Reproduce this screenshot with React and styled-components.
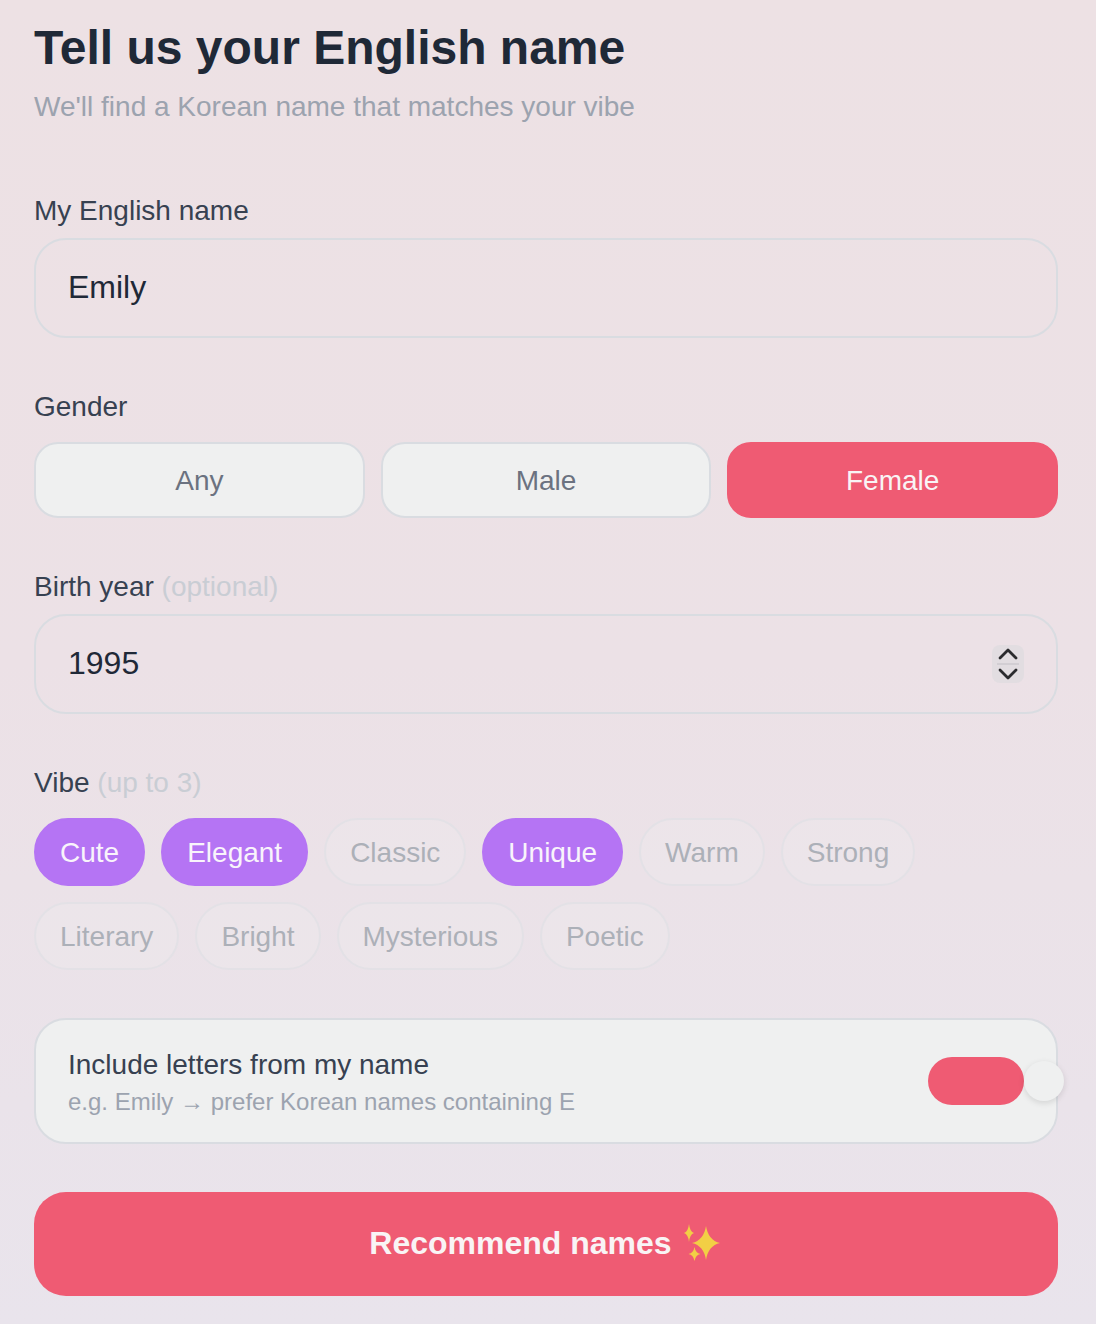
import React from 'react';
import styled, { createGlobalStyle } from 'styled-components';

const GlobalStyle = createGlobalStyle`
  html, body {
    margin: 0;
    padding: 0;
  }
  body {
    font-family: 'Liberation Sans', Arial, sans-serif;
    color: #1f2937;
  }
  * {
    box-sizing: border-box;
  }
`;

const Page = styled.div`
  width: 1096px;
  height: 1324px;
  overflow: hidden;
  padding: 20px 38px 0 34px;
  background: linear-gradient(180deg, #ede1e4 0%, #ece1e6 50%, #e9e4ec 100%);
`;

const Title = styled.h1`
  margin: 0;
  font-size: 48px;
  line-height: 56px;
  font-weight: 700;
  color: #1f2937;
`;

const Subtitle = styled.p`
  margin: 11px 0 0;
  font-size: 28px;
  line-height: 40px;
  color: #9ca3af;
`;

const Label = styled.div`
  margin-top: ${(p) => p.$top || 51}px;
  margin-bottom: ${(p) => p.$gap || 9}px;
  font-size: 28px;
  line-height: 36px;
  color: #374151;
`;

const Hint = styled.span`
  color: #c9cdd4;
`;

const Field = styled.div`
  height: 100px;
  padding: 0 32px;
  display: flex;
  align-items: center;
  justify-content: space-between;
  border: 2px solid #d9dce1;
  border-radius: 32px;
  font-size: 32px;
  color: #1f2937;
`;

const FieldValue = styled.span`
  margin-bottom: 2px;
`;

const Stepper = styled.div`
  width: 32px;
  height: 38px;
  display: flex;
  border-radius: 8px;
  background: #e2dde1;
`;

const Segments = styled.div`
  display: grid;
  grid-template-columns: repeat(3, 1fr);
  gap: 16px;
`;

const Segment = styled.div`
  height: 76px;
  padding-top: 2px;
  display: flex;
  align-items: center;
  justify-content: center;
  border: 2px solid ${(p) => (p.$on ? '#ef5b73' : '#d9dce1')};
  border-radius: 24px;
  background: ${(p) => (p.$on ? '#ef5b73' : '#eff0f0')};
  color: ${(p) => (p.$on ? '#f9f4f5' : '#6b7280')};
  font-size: 28px;
`;

const Chips = styled.div`
  display: flex;
  flex-wrap: wrap;
  gap: 16px;
`;

const Chip = styled.div`
  height: 68px;
  padding: 2px 24px 0;
  display: flex;
  align-items: center;
  border: 2px solid ${(p) => (p.$on ? '#b574f4' : '#e3e1e6')};
  border-radius: 34px;
  background: ${(p) => (p.$on ? '#b574f4' : 'rgba(240, 240, 240, 0.25)')};
  color: ${(p) => (p.$on ? '#f9f4fb' : '#acb0b8')};
  font-size: 28px;
`;

const ToggleCard = styled.div`
  margin-top: 48px;
  height: 126px;
  padding: 0 32px;
  display: flex;
  align-items: center;
  justify-content: space-between;
  border: 2px solid #d9dce1;
  border-radius: 32px;
  background: #eff0f0;
`;

const ToggleTitle = styled.div`
  font-size: 28px;
  line-height: 40px;
  color: #374151;
`;

const ToggleHint = styled.div`
  margin-top: 1px;
  font-size: 24px;
  line-height: 32px;
  color: #9ca3af;
`;

const Track = styled.div`
  position: relative;
  width: 96px;
  height: 48px;
  border-radius: 24px;
  background: #ef5b73;
`;

const Knob = styled.div`
  position: absolute;
  left: 96px;
  top: 4px;
  width: 40px;
  height: 40px;
  border-radius: 50%;
  background: #eff0f0;
  box-shadow: 0 2px 6px rgba(0, 0, 0, 0.12);
`;

const Submit = styled.button`
  display: flex;
  align-items: center;
  justify-content: center;
  gap: 11px;
  width: 100%;
  height: 104px;
  margin-top: 48px;
  padding: 0 2px 2px 0;
  border: 0;
  border-radius: 32px;
  background: #ef5b73;
  color: #f9f4f5;
  font-family: inherit;
  font-size: 32px;
  font-weight: 700;
`;

const StepperIcon = () => (
  <Stepper>
    <svg width="32" height="38" viewBox="0 0 32 38" fill="none">
      <path d="M8 13l8-8 8 8M8 25l8 8 8-8" stroke="#2b2b2e" strokeWidth="2.8" strokeLinecap="round" strokeLinejoin="round" />
      <path d="M5 19h22" stroke="#d2ced3" strokeWidth="2" />
    </svg>
  </Stepper>
);

const stars = [
  { cx: 23, cy: 19, rx: 14, ry: 17 },
  { cx: 6, cy: 9, rx: 5, ry: 9 },
  { cx: 11.500, cy: 30, rx: 6, ry: 7 },
];

const starPath = ({ cx, cy, rx, ry }) => {
  const kx = rx * 0.16;
  const ky = ry * 0.16;
  return (
    `M${cx} ${cy - ry}Q${cx + kx} ${cy - ky} ${cx + rx} ${cy}` +
    `Q${cx + kx} ${cy + ky} ${cx} ${cy + ry}` +
    `Q${cx - kx} ${cy + ky} ${cx - rx} ${cy}` +
    `Q${cx - kx} ${cy - ky} ${cx} ${cy - ry}z`
  );
};

const Sparkles = () => (
  <svg width="38" height="38" viewBox="0 0 38 38">
    {stars.map((s) => (
      <path key={s.cx} d={starPath(s)} fill="#f2cf45" />
    ))}
  </svg>
);

const App = () => {
  const genders = ['Any', 'Male', 'Female'];
  const vibes = [
    ['Cute', true],
    ['Elegant', true],
    ['Classic', false],
    ['Unique', true],
    ['Warm', false],
    ['Strong', false],
    ['Literary', false],
    ['Bright', false],
    ['Mysterious', false],
    ['Poetic', false],
  ];

  return (
    <Page>
      <GlobalStyle />
      <Title>Tell us your English name</Title>
      <Subtitle>We'll find a Korean name that matches your vibe</Subtitle>

      <Label $top={66}>My English name</Label>
      <Field>
        <FieldValue>Emily</FieldValue>
      </Field>

      <Label $gap={17}>Gender</Label>
      <Segments>
        {genders.map((g) => (
          <Segment key={g} $on={g === 'Female'}>{g}</Segment>
        ))}
      </Segments>

      <Label>Birth year <Hint>(optional)</Hint></Label>
      <Field>
        <FieldValue>1995</FieldValue>
        <StepperIcon />
      </Field>

      <Label $gap={17}>Vibe <Hint>(up to 3)</Hint></Label>
      <Chips>
        {vibes.map(([name, on]) => (
          <Chip key={name} $on={on}>{name}</Chip>
        ))}
      </Chips>

      <ToggleCard>
        <div>
          <ToggleTitle>Include letters from my name</ToggleTitle>
          <ToggleHint>e.g. Emily → prefer Korean names containing E</ToggleHint>
        </div>
        <Track>
          <Knob />
        </Track>
      </ToggleCard>

      <Submit>
        Recommend names
        <Sparkles />
      </Submit>
    </Page>
  );
};

export default App;
